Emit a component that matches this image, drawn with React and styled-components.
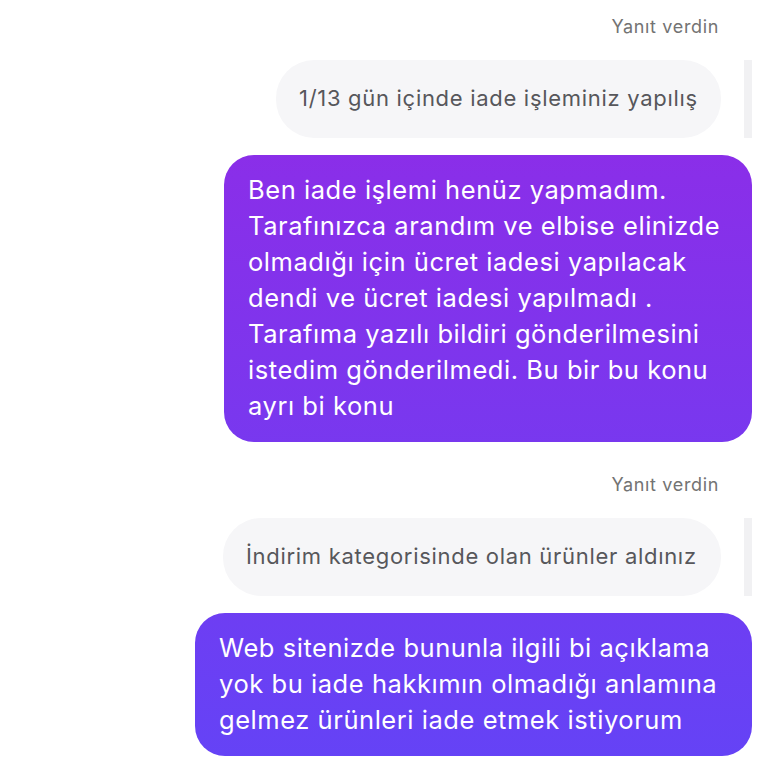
import React from 'react'
import styled, { createGlobalStyle } from 'styled-components';

const Global = createGlobalStyle`
  body {
    margin: 0;
    background: #ffffff;
    font-family: Inter, "Noto Sans", sans-serif;
    -webkit-font-smoothing: antialiased;
  }
`

const messages = [
  {
    quote: '1/13 gün içinde iade işleminiz yapılış',
    quoteWidth: 445,
    text: 'Ben iade işlemi henüz yapmadım.\nTarafınızca arandım ve elbise elinizde\nolmadığı için ücret iadesi yapılacak\ndendi ve ücret iadesi yapılmadı .\nTarafıma yazılı bildiri gönderilmesini\nistedim gönderilmedi. Bu bir bu konu\nayrı bi konu',
    width: 528,
  },
  {
    quote: 'İndirim kategorisinde olan ürünler aldınız',
    quoteWidth: 498,
    text: 'Web sitenizde bununla ilgili bi açıklama\nyok bu iade hakkımın olmadığı anlamına\ngelmez ürünleri iade etmek istiyorum',
    width: 557,
  },
]

function App() {
  return (
    <Thread>
      <Global />
      {messages.map((m, i) => (
        <Group key={i} $first={i === 0}>
          <Label>Yanıt verdin</Label>
          <QuoteRow>
            <Quote $width={m.quoteWidth}>{m.quote}</Quote>
            <QuoteBar />
          </QuoteRow>
          <Bubble $width={m.width}>{m.text}</Bubble>
        </Group>
      ))}
    </Thread>
  )
}

const Thread = styled.div`
  display: flex;
  flex-direction: column;
  align-items: flex-end;
  padding: 16px 16px 0 0;
  height: 768px;
  box-sizing: border-box;
  overflow: hidden;
`

const Group = styled.div`
  display: flex;
  flex-direction: column;
  align-items: flex-end;
  margin-top: ${p => p.$first ? '0' : '32px'};
`

const Label = styled.div`
  font-size: 18px;
  line-height: 22px;
  letter-spacing: 0.65px;
  color: #737373;
  padding-right: 33px;
  margin-bottom: 22px;
`

const QuoteRow = styled.div`
  display: flex;
  align-items: stretch;
  gap: 23px;
  margin-bottom: 17px;
`

const Quote = styled.div`
  width: ${p => p.$width}px;
  box-sizing: border-box;
  padding: 24px 23px 25px;
  background: #f6f6f8;
  border-radius: 38px;
  font-size: 22px;
  line-height: 29px;
  letter-spacing: 0.7px;
  color: #57575b;
  white-space: nowrap;
`

const QuoteBar = styled.div`
  width: 8px;
  background: #f1f1f3;
`

const Bubble = styled.div`
  width: ${p => p.$width}px;
  box-sizing: border-box;
  padding: 17px 24px 18px;
  border-radius: 30px;
  background: linear-gradient(180deg, #9429e5 0px, #6443f6 768px);
  background-attachment: fixed;
  color: #ffffff;
  font-size: 25.5px;
  line-height: 36px;
  letter-spacing: 0.55px;
  white-space: pre-line;
`

export default App
